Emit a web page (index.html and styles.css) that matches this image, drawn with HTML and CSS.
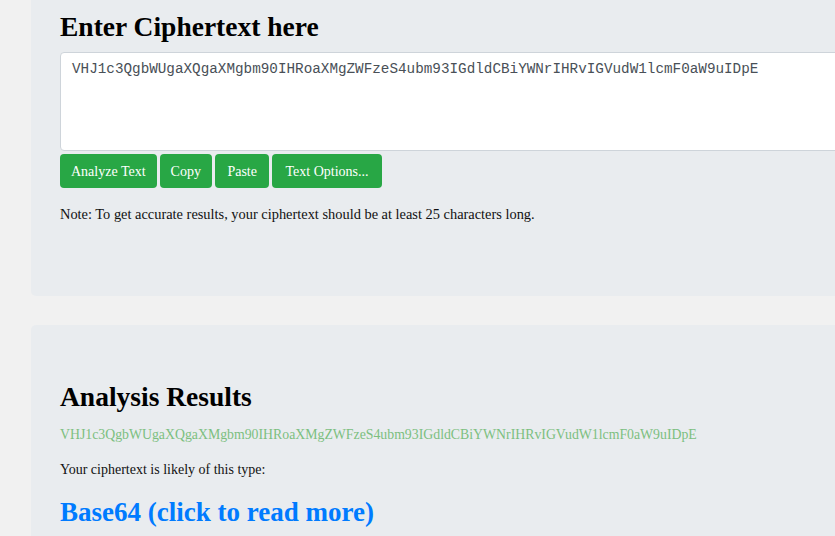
FILE: index.html
```html
<!DOCTYPE html>
<html lang="en">
<head>
<meta charset="utf-8">
<title>Cipher Identifier</title>
<link rel="stylesheet" href="styles.css">
</head>
<body>
<main class="page">
  <section class="card card-input">
    <h2 class="title">Enter Ciphertext here</h2>
    <textarea class="cipher-input" spellcheck="false">VHJ1c3QgbWUgaXQgaXMgbm90IHRoaXMgZWFzeS4ubm93IGdldCBiYWNrIHRvIGVudW1lcmF0aW9uIDpE</textarea>
    <div class="btn-row">
      <button class="btn">Analyze Text</button>
      <button class="btn btn-copy">Copy</button>
      <button class="btn btn-paste">Paste</button>
      <button class="btn btn-options">Text Options...</button>
    </div>
    <p class="note">Note: To get accurate results, your ciphertext should be at least 25 characters long.</p>
  </section>
  <section class="card card-results">
    <h2 class="title">Analysis Results</h2>
    <p class="echo">VHJ1c3QgbWUgaXQgaXMgbm90IHRoaXMgZWFzeS4ubm93IGdldCBiYWNrIHRvIGVudW1lcmF0aW9uIDpE</p>
    <p class="likely">Your ciphertext is likely of this type:</p>
    <a class="result-link" href="#">Base64 (click to read more)</a>
  </section>
</main>
</body>
</html>
```

FILE: styles.css
```css
html, body {
  margin: 0;
  padding: 0;
  overflow: hidden;
  background: #f1f1f1;
  font-family: "Liberation Serif", "Times New Roman", serif;
  color: #111;
}

.page {
  width: 1000px;
  padding-left: 31px;
  margin-top: -20px;
}

.card {
  background: #e9ecef;
  border-radius: 5px;
  padding-left: 29px;
}

.card-input {
  padding-top: 31px;
  height: 316px;
  box-sizing: border-box;
  margin-bottom: 29px;
}

.title {
  margin: 0;
  font-size: 27.5px;
  font-weight: bold;
  line-height: 32px;
  color: #000;
}

.cipher-input {
  display: block;
  box-sizing: border-box;
  width: 900px;
  height: 99px;
  margin-top: 9px;
  padding: 6px 11px;
  border: 1px solid #ced4da;
  border-radius: 4px;
  background: #fff;
  font-family: "Liberation Mono", "Courier New", monospace;
  font-size: 14.3px;
  line-height: 20px;
  color: #495057;
  resize: none;
  outline: none;
}

.btn-row {
  display: flex;
  gap: 3px;
  margin-top: 3px;
}

.btn {
  height: 34px;
  padding: 1px 11px 0;
  border: none;
  border-radius: 4px;
  background: #28a745;
  color: #fff;
  font-family: "Liberation Serif", "Times New Roman", serif;
  font-size: 14px;
  cursor: pointer;
}

.btn-copy {
  padding: 1px 11px 0;
}

.btn-paste {
  padding: 1px 12.5px 0;
}

.btn-options {
  padding: 1px 13px 0;
}

.note {
  margin: 16px 0 0;
  font-size: 14.4px;
  line-height: 21px;
  color: #111;
}

.card-results {
  padding-top: 56px;
  height: 300px;
  box-sizing: border-box;
}

.echo {
  margin: 11px 0 0;
  font-size: 13.8px;
  line-height: 21px;
  color: #7cbf7f;
}

.likely {
  margin: 14px 0 0;
  font-size: 14px;
  line-height: 21px;
  color: #111;
}

.result-link {
  display: block;
  margin-top: 16px;
  font-size: 27px;
  font-weight: bold;
  line-height: 32px;
  color: #007bff;
  text-decoration: none;
}
```
